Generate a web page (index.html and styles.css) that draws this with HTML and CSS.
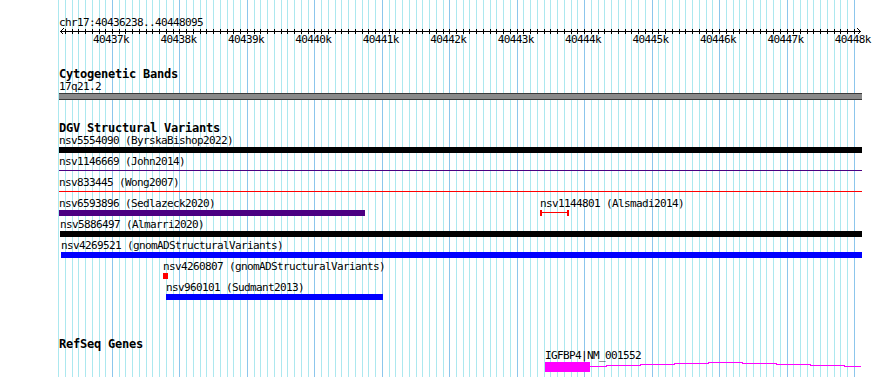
FILE: index.html
```html
<!DOCTYPE html>
<html lang="en">
<head>
<meta charset="utf-8">
<title>chr17:40436238..40448095</title>
<link rel="stylesheet" href="styles.css">
</head>
<body>
<div class="view">
  <div class="ruler">
    <div class="locus">chr17:40436238..40448095</div>
    <svg class="axis" width="803" height="7" viewBox="59 28 803 7" shape-rendering="crispEdges">
      <path class="axis-line" d="M60 31.5H861"/>
      <path class="axis-line" d="M63.5 28.5L60.5 31.5L63.5 34.5M857.5 28.5L860.5 31.5L857.5 34.5"/>
      <path class="axis-line" d="M65.5 29V34M72.5 29V34M78.5 29V34M85.5 29V34M92.5 29V34M99.5 29V34M105.5 29V34M112.5 29V34M119.5 29V34M125.5 29V34M132.5 29V34M139.5 29V34M146.5 29V34M152.5 29V34M159.5 29V34M166.5 29V34M173.5 29V34M179.5 29V34M186.5 29V34M193.5 29V34M200.5 29V34M206.5 29V34M213.5 29V34M220.5 29V34M227.5 29V34M233.5 29V34M240.5 29V34M247.5 29V34M254.5 29V34M260.5 29V34M267.5 29V34M274.5 29V34M281.5 29V34M287.5 29V34M294.5 29V34M301.5 29V34M308.5 29V34M314.5 29V34M321.5 29V34M328.5 29V34M335.5 29V34M341.5 29V34M348.5 29V34M355.5 29V34M362.5 29V34M368.5 29V34M375.5 29V34M382.5 29V34M389.5 29V34M395.5 29V34M402.5 29V34M409.5 29V34M416.5 29V34M422.5 29V34M429.5 29V34M436.5 29V34M443.5 29V34M449.5 29V34M456.5 29V34M463.5 29V34M469.5 29V34M476.5 29V34M483.5 29V34M490.5 29V34M496.5 29V34M503.5 29V34M510.5 29V34M517.5 29V34M523.5 29V34M530.5 29V34M537.5 29V34M544.5 29V34M550.5 29V34M557.5 29V34M564.5 29V34M571.5 29V34M577.5 29V34M584.5 29V34M591.5 29V34M598.5 29V34M604.5 29V34M611.5 29V34M618.5 29V34M625.5 29V34M631.5 29V34M638.5 29V34M645.5 29V34M652.5 29V34M658.5 29V34M665.5 29V34M672.5 29V34M679.5 29V34M685.5 29V34M692.5 29V34M699.5 29V34M706.5 29V34M712.5 29V34M719.5 29V34M726.5 29V34M733.5 29V34M739.5 29V34M746.5 29V34M753.5 29V34M760.5 29V34M766.5 29V34M773.5 29V34M780.5 29V34M787.5 29V34M793.5 29V34M800.5 29V34M807.5 29V34M813.5 29V34M820.5 29V34M827.5 29V34M834.5 29V34M840.5 29V34M847.5 29V34M854.5 29V34"/>
    </svg>
    <div class="ticklabels">
      <span>40437k</span><span>40438k</span><span>40439k</span><span>40440k</span><span>40441k</span><span>40442k</span><span>40443k</span><span>40444k</span><span>40445k</span><span>40446k</span><span>40447k</span><span>40448k</span>
    </div>
  </div>

  <section class="track cyto">
    <h2 class="track-title">Cytogenetic Bands</h2>
    <div class="feat" style="width:803px">
      <div class="label">17q21.2</div>
      <div class="band"></div>
    </div>
  </section>

  <section class="track dgv">
    <h2 class="track-title">DGV Structural Variants</h2>
    <div class="row">
      <div class="feat" style="width:803px">
        <div class="label">nsv5554090 (ByrskaBishop2022)</div>
        <div class="box black"></div>
      </div>
    </div>
    <div class="row">
      <div class="feat" style="width:803px">
        <div class="label">nsv1146669 (John2014)</div>
        <div class="thin indigo"></div>
      </div>
    </div>
    <div class="row">
      <div class="feat" style="width:803px">
        <div class="label">nsv833445 (Wong2007)</div>
        <div class="thin red"></div>
      </div>
    </div>
    <div class="row">
      <div class="feat" style="width:306px">
        <div class="label">nsv6593896 (Sedlazeck2020)</div>
        <div class="box indigo"></div>
      </div>
      <div class="feat" style="margin-left:175px;width:29px">
        <div class="label">nsv1144801 (Alsmadi2014)</div>
        <div class="errbar"></div>
      </div>
    </div>
    <div class="row">
      <div class="feat" style="margin-left:1px;width:802px">
        <div class="label">nsv5886497 (Almarri2020)</div>
        <div class="box black"></div>
      </div>
    </div>
    <div class="row">
      <div class="feat" style="margin-left:2px;width:801px">
        <div class="label">nsv4269521 (gnomADStructuralVariants)</div>
        <div class="box blue"></div>
      </div>
    </div>
    <div class="row">
      <div class="feat" style="margin-left:104px;width:5px">
        <div class="label">nsv4260807 (gnomADStructuralVariants)</div>
        <div class="box red"></div>
      </div>
    </div>
    <div class="row">
      <div class="feat" style="margin-left:107px;width:217px">
        <div class="label">nsv960101 (Sudmant2013)</div>
        <div class="box blue"></div>
      </div>
    </div>
  </section>

  <section class="track refseq">
    <h2 class="track-title">RefSeq Genes</h2>
    <div class="gene" style="margin-left:486px">
      <div class="label gene-label">IGFBP4|NM_001552</div>
    </div>
    <svg class="transcript" width="803" height="12" viewBox="59 361 803 12" shape-rendering="crispEdges">
      <rect class="exon" x="545" y="362" width="45" height="10"/>
      <path class="intron" d="M590 366.5H606V365.5H640V364.5H674V363.5H708V362.5H742V363.5H776V364.5H810V365.5H844V366.5H861"/>
    </svg>
  </section>
</div>
</body>
</html>
```

FILE: styles.css
```css
* {
  box-sizing: border-box;
}

body {
  margin: 0;
  background: #ffffff;
}

.view {
  width: 890px;
  height: 377px;
  overflow: hidden;
  padding: 17px 0 0 59px;
  font-family: "DejaVu Sans Mono", "Liberation Mono", monospace;
  font-size: 11px;
  letter-spacing: -0.62px;
  color: #000;
  background-color: #fff;
  background-image: url("data:image/svg+xml,<svg xmlns='http://www.w3.org/2000/svg' width='890' height='377' shape-rendering='crispEdges'><path stroke='%23ace8ef' d='M58.5 0V377M65.5 0V377M72.5 0V377M78.5 0V377M85.5 0V377M92.5 0V377M99.5 0V377M105.5 0V377M119.5 0V377M125.5 0V377M132.5 0V377M139.5 0V377M146.5 0V377M152.5 0V377M159.5 0V377M166.5 0V377M173.5 0V377M186.5 0V377M193.5 0V377M200.5 0V377M206.5 0V377M213.5 0V377M220.5 0V377M227.5 0V377M233.5 0V377M240.5 0V377M254.5 0V377M260.5 0V377M267.5 0V377M274.5 0V377M281.5 0V377M287.5 0V377M294.5 0V377M301.5 0V377M308.5 0V377M321.5 0V377M328.5 0V377M335.5 0V377M341.5 0V377M348.5 0V377M355.5 0V377M362.5 0V377M368.5 0V377M375.5 0V377M389.5 0V377M395.5 0V377M402.5 0V377M409.5 0V377M416.5 0V377M422.5 0V377M429.5 0V377M436.5 0V377M443.5 0V377M456.5 0V377M463.5 0V377M469.5 0V377M476.5 0V377M483.5 0V377M490.5 0V377M496.5 0V377M503.5 0V377M510.5 0V377M523.5 0V377M530.5 0V377M537.5 0V377M544.5 0V377M550.5 0V377M557.5 0V377M564.5 0V377M571.5 0V377M577.5 0V377M591.5 0V377M598.5 0V377M604.5 0V377M611.5 0V377M618.5 0V377M625.5 0V377M631.5 0V377M638.5 0V377M645.5 0V377M658.5 0V377M665.5 0V377M672.5 0V377M679.5 0V377M685.5 0V377M692.5 0V377M699.5 0V377M706.5 0V377M712.5 0V377M726.5 0V377M733.5 0V377M739.5 0V377M746.5 0V377M753.5 0V377M760.5 0V377M766.5 0V377M773.5 0V377M780.5 0V377M793.5 0V377M800.5 0V377M807.5 0V377M813.5 0V377M820.5 0V377M827.5 0V377M834.5 0V377M840.5 0V377M847.5 0V377'/><path stroke='%238cc6ec' d='M112.5 0V377M179.5 0V377M247.5 0V377M314.5 0V377M382.5 0V377M449.5 0V377M517.5 0V377M584.5 0V377M652.5 0V377M719.5 0V377M787.5 0V377M854.5 0V377'/></svg>");
  background-repeat: no-repeat;
}

/* ruler */
.locus {
  line-height: 11px;
  height: 11px;
  white-space: nowrap;
}

.axis {
  display: block;
}

.axis-line {
  stroke: #000;
  stroke-width: 1;
  fill: none;
}

.ticklabels {
  display: flex;
  padding-left: 34px;
  height: 10px;
  line-height: 10px;
  white-space: nowrap;
}

.ticklabels span {
  flex: none;
  width: 67.45px;
}

/* tracks */
.track {
  display: block;
}

.track-title {
  margin: 0;
  font-size: 12px;
  font-weight: bold;
  letter-spacing: -0.22px;
  line-height: 14px;
  height: 14px;
  white-space: nowrap;
}

.cyto {
  margin-top: 22px;
}

.dgv {
  margin-top: 21px;
}

.refseq {
  margin-top: 34px;
}

.label {
  height: 12px;
  line-height: 12px;
  white-space: nowrap;
}

.band {
  height: 7px;
  background: #8a8a8a;
  border-top: 1px solid #3a3a3a;
  border-bottom: 1px solid #3a3a3a;
}

.row {
  display: flex;
  height: 21px;
}

.feat {
  flex: none;
}

.box {
  height: 6px;
}

.thin {
  height: 1px;
  margin-top: 2px;
}

.black { background: #000; }
.indigo { background: #4b0082; }
.red { background: #ff0000; }
.blue { background: #0000ff; }

.errbar {
  height: 6px;
  border-left: 2px solid #ff0000;
  border-right: 2px solid #ff0000;
  background: linear-gradient(#ff0000, #ff0000) 0 2px / 100% 1px no-repeat;
}

.gene-label {
  height: 10px;
  line-height: 10px;
}

.transcript {
  display: block;
  margin-top: 0;
}

.exon {
  fill: #ff00ff;
}

.intron {
  stroke: #ff00ff;
  stroke-width: 1;
  fill: none;
}
```
